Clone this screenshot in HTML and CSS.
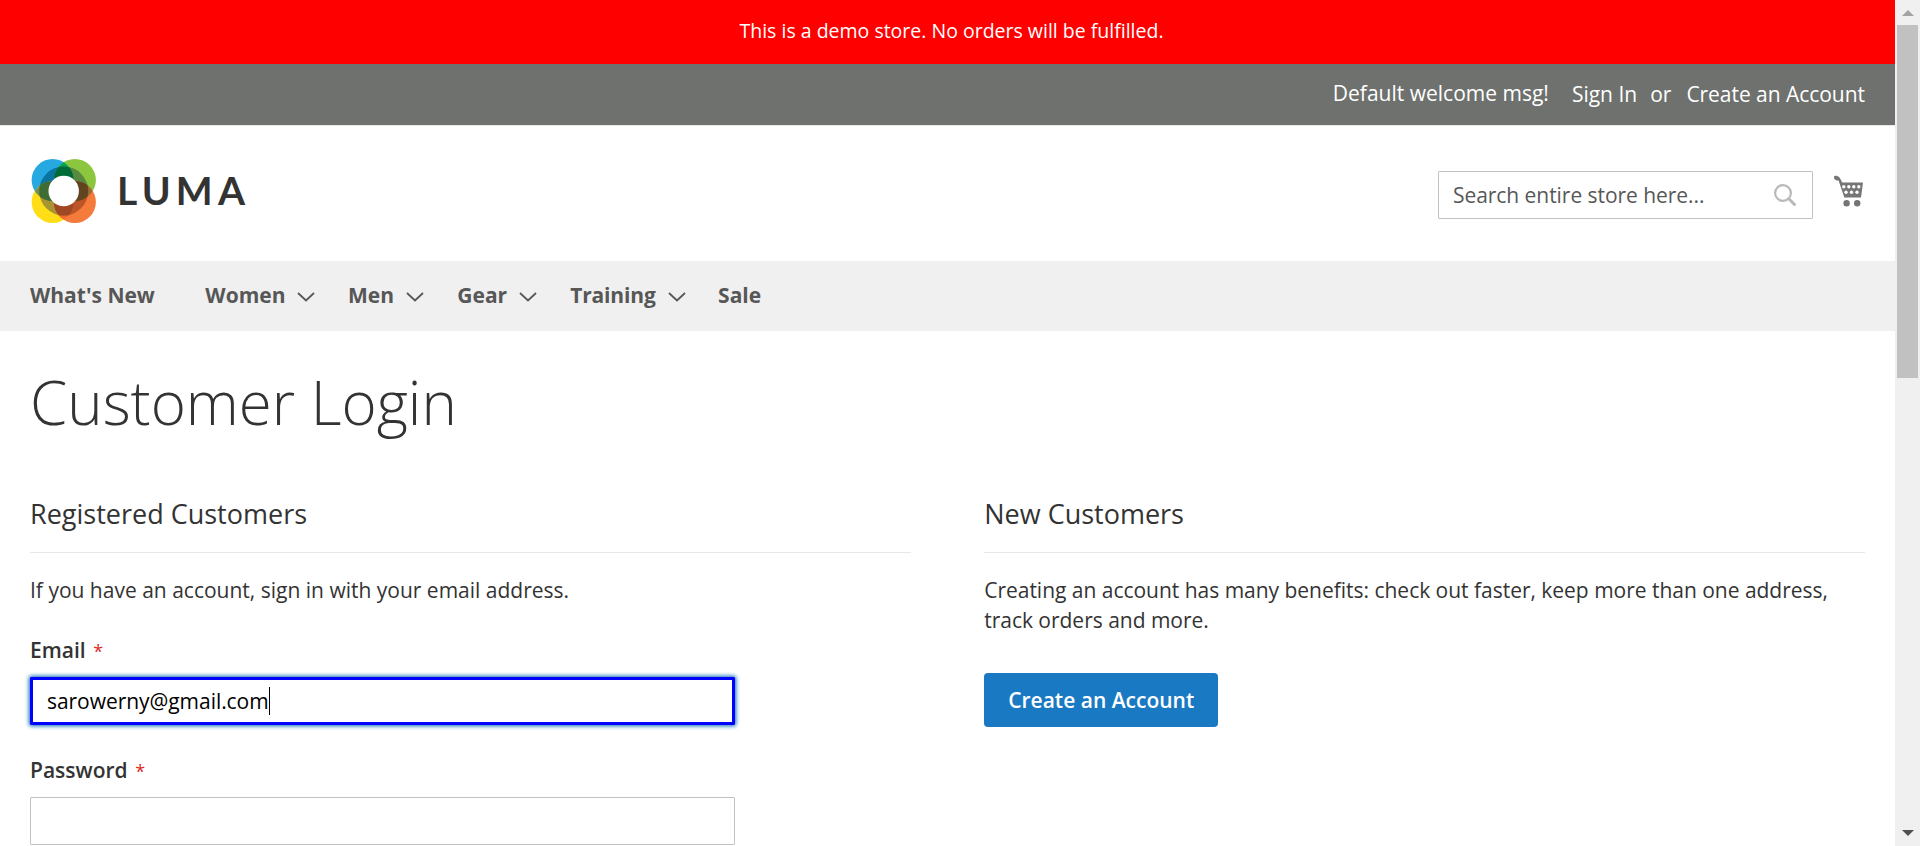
FILE: index.html
```html
<!DOCTYPE html>
<html lang="en">
<head>
<meta charset="utf-8">
<title>Customer Login</title>
<link rel="stylesheet" href="styles.css">
</head>
<body>
<div class="viewport">
  <div class="page">
    <div class="demo-notice">This is a demo store. No orders will be fulfilled.</div>
    <header>
      <div class="panel">
        <span class="welcome">Default welcome msg!</span>
        <a class="sign-in">Sign In</a>
        <span class="or">or</span>
        <a class="create">Create an Account</a>
      </div>
      <div class="header-content">
        <div class="logo">
          <svg class="logo-mark" width="67" height="67" viewBox="30 158 67 67">
            <defs>
              <clipPath id="blue"><circle cx="52.6" cy="180" r="21"/></clipPath>
              <clipPath id="orange"><circle cx="74.9" cy="202" r="21"/></clipPath>
              <clipPath id="ring"><circle cx="63.7" cy="191" r="24.5"/></clipPath>
            </defs>
            <circle cx="52.6" cy="180" r="21" fill="#26a9e1"/>
            <circle cx="74.9" cy="180" r="21" fill="#8cc63f"/>
            <circle cx="52.6" cy="202" r="21" fill="#ffde17"/>
            <circle cx="74.9" cy="202" r="21" fill="#f47b3b"/>
            <g clip-path="url(#blue)">
              <circle cx="74.9" cy="180" r="21" fill="#00a650"/>
              <circle cx="52.6" cy="202" r="21" fill="#739150"/>
            </g>
            <g clip-path="url(#orange)">
              <circle cx="74.9" cy="180" r="21" fill="#9b6b3a"/>
              <circle cx="52.6" cy="202" r="21" fill="#f26a2e"/>
            </g>
            <g clip-path="url(#ring)">
              <circle cx="52.6" cy="180" r="21" fill="#0a74a3"/>
              <circle cx="74.9" cy="180" r="21" fill="#59893f"/>
              <circle cx="52.6" cy="202" r="21" fill="#a79432"/>
              <circle cx="74.9" cy="202" r="21" fill="#bd5427"/>
              <g clip-path="url(#blue)">
                <circle cx="74.9" cy="180" r="21" fill="#006b36"/>
                <circle cx="52.6" cy="202" r="21" fill="#3f6b34"/>
              </g>
              <g clip-path="url(#orange)">
                <circle cx="74.9" cy="180" r="21" fill="#60451e"/>
                <circle cx="52.6" cy="202" r="21" fill="#a04723"/>
              </g>
            </g>
            <circle cx="63.7" cy="191" r="15.2" fill="#fff"/>
          </svg>
          <span class="logo-text">LUMA</span>
        </div>
        <div class="search">
          <span>Search entire store here...</span>
          <svg width="24" height="24" viewBox="0 0 24 24"><circle cx="10" cy="10" r="7.9" fill="none" stroke="#b9b9b9" stroke-width="2.2"/><path d="M15.8 15.8L21.500 21.500" stroke="#b9b9b9" stroke-width="3" stroke-linecap="round"/></svg>
        </div>
        <svg class="cart" width="31" height="32" viewBox="0 0 31 32" fill="#757575">
          <path d="M1 2.2C1 .8 2.2.5 4 .9c2 .4 2.8 1.700 3.700 3.500L9.200 7.500H30L28 22.500H11.300L5.600 5.500C3.500 5.500 1 4.800 1 2.200Z"/>
          <circle cx="13.600" cy="28.200" r="3.200"/><circle cx="24.200" cy="28.200" r="3.200"/>
          <g fill="#fff"><circle cx="10.800" cy="11.800" r="1.700"/><circle cx="15.800" cy="11.800" r="1.700"/><circle cx="20.800" cy="11.800" r="1.700"/><circle cx="25.800" cy="11.800" r="1.700"/><circle cx="13" cy="17.300" r="1.700"/><circle cx="18.500" cy="17.300" r="1.700"/><circle cx="24" cy="17.300" r="1.700"/></g>
        </svg>
      </div>
    </header>
    <nav class="nav">
      <a class="plain">What's New</a>
      <a class="women">Women <svg class="chev" viewBox="0 0 18 10"><path d="M1 1L9 8.500L17 1"/></svg></a>
      <a class="men">Men <svg class="chev" viewBox="0 0 18 10"><path d="M1 1L9 8.500L17 1"/></svg></a>
      <a class="gear">Gear <svg class="chev" viewBox="0 0 18 10"><path d="M1 1L9 8.500L17 1"/></svg></a>
      <a class="training">Training <svg class="chev" viewBox="0 0 18 10"><path d="M1 1L9 8.500L17 1"/></svg></a>
      <a>Sale</a>
    </nav>
    <main>
      <h1>Customer Login</h1>
      <div class="columns">
        <section>
          <h2>Registered Customers</h2>
          <p>If you have an account, sign in with your email address.</p>
          <div class="label">Email<span class="req">*</span></div>
          <div class="input focused">sarowerny@gmail.com<span class="caret"></span></div>
          <div class="label">Password<span class="req">*</span></div>
          <div class="input"></div>
        </section>
        <section>
          <h2>New Customers</h2>
          <p class="benefits">Creating an account has many benefits: check out faster, keep more than one address, track orders and more.</p>
          <a class="button">Create an Account</a>
        </section>
      </div>
    </main>
  </div>
  <div class="scrollbar">
    <svg class="arrow" width="12" height="6" viewBox="0 0 12 6"><path d="M0 6L6 0L12 6Z" fill="#a3a3a3"/></svg>
    <div class="thumb"></div>
    <svg class="arrow" width="12" height="6" viewBox="0 0 12 6"><path d="M0 0L6 6L12 0Z" fill="#505050"/></svg>
  </div>
</div>
</body>
</html>
```
FILE: styles.css
```css
* { box-sizing: border-box; }
body { margin: 0; font: 400 21px/30px "Open Sans", "Noto Sans", sans-serif; color: #333; background: #fff; overflow: hidden; }
svg { display: block; flex: none; }
.viewport { display: flex; height: 846px; overflow: hidden; }
.page { flex: 1; min-width: 0; background: #fff; }
.demo-notice { height: 64px; padding: 16px 0 0 8px; background: #f00; color: #fff; font-size: 19.5px; text-align: center; }
.panel { display: flex; justify-content: flex-end; align-items: flex-start; height: 61px; padding: 14px 30px 0 0; background: #6e716e; color: #fff; white-space: nowrap; }
.welcome { margin-right: 23px; }
.sign-in { margin: 1px 13px 0 0; }
.or { margin: 1px 15px 0 0; }
.create { margin-top: 1px; letter-spacing: -0.04px; }
.header-content { display: flex; align-items: flex-start; height: 136px; padding: 33px 30px 0; border-top: 1px solid #e8e8e8; }
.logo { display: flex; flex: 1; }
.logo-mark { margin-top: -1px; }
.logo-text { margin: 11px 0 0 20px; font: 700 39px/40px Lato, sans-serif; letter-spacing: 5.2px; color: #333; }
.search { display: flex; justify-content: space-between; align-items: center; width: 375px; height: 48px; margin: 12px 20px 0 0; padding: 0 15px 0 14px; border: 1px solid #c2c2c2; border-radius: 1px; color: #575757; letter-spacing: -0.05px; }
.cart { margin: 16px 1px 0 0; }
.nav { display: flex; height: 70px; padding: 19px 30px 0; background: #f0f0f0; color: #575757; font-weight: 700; white-space: nowrap; }
.nav a { display: flex; margin-right: 32.5px; }
.nav .plain { margin-right: 50.5px; }
.nav .men { margin-right: 33.3px; }
.nav .gear { margin-right: 33px; }
.nav .training { letter-spacing: -0.15px; }
.chev { width: 18px; height: 10px; margin: 12px 0 0 12px; fill: none; stroke: #575757; stroke-width: 1.8; }
main { padding: 38px 30px 0; }
h1 { margin: 0; font-size: 60px; font-weight: 300; line-height: 66px; }
.columns { display: flex; justify-content: space-between; margin-top: 64px; }
section { width: 48%; }
h2 { margin: 0 0 22px; height: 54px; border-bottom: 1px solid #e8e8e8; font-size: 27px; font-weight: 400; line-height: 30px; }
p { margin: 0; }
.benefits { letter-spacing: -0.02px; }
.label { margin-top: 30px; font-weight: 600; }
.req { margin-left: 7.5px; color: #e02b27; font-size: 18px; font-weight: 400; line-height: 1; }
.input { display: flex; align-items: center; width: 705px; height: 48px; margin-top: 12px; padding: 0 14px; border: 1px solid #c2c2c2; border-radius: 1px; color: #000; }
.focused { border: 3px solid #00f; box-shadow: 0 0 4px 1px #006bb4; letter-spacing: -0.05px; }
.caret { width: 1px; height: 28px; background: #000; }
.button { display: inline-block; height: 54px; margin-top: 38px; padding: 12px 24px; border-radius: 4px; background: #1979c3; color: #fff; font-weight: 600; }
.scrollbar { display: flex; flex-direction: column; align-items: center; width: 25px; padding: 10px 0; background: #f0f0f0; }
.thumb { width: 21px; height: 353px; margin-top: 9px; background: #c1c1c1; }
.scrollbar .arrow:last-child { margin-top: auto; }
```
